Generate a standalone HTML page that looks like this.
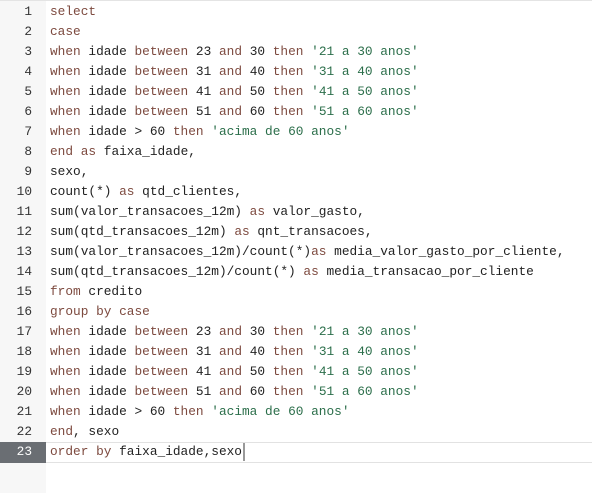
<!DOCTYPE html>
<html><head><style>
body{margin:0;width:592px;height:493px;background:#fff;overflow:hidden;font-family:"Liberation Mono",monospace;font-size:12.8px;position:relative}
#top{position:absolute;left:0;top:0;width:592px;height:1px;background:#e4e4e4}
#gut{position:absolute;left:0;top:1px;width:46px;height:492px;background:#f7f7f7}
.l{position:absolute;left:0;height:20px;line-height:20px;width:592px;white-space:pre;color:#222}
.n{position:absolute;left:0;width:32px;text-align:right;color:#333}
.c{position:absolute;left:50px}
.k{color:#7d4a3f}.s{color:#2b6e4a}
.cur{background:none}
#curline{position:absolute;left:46px;top:442px;width:546px;height:19px;border-top:1px solid #e2e2e2;border-bottom:1px solid #e2e2e2}
#curg{position:absolute;left:0;top:442px;width:46px;height:21px;background:#6a6e73}
#caret{position:absolute;left:243px;top:443px;width:1.5px;height:18px;background:#999}
</style></head><body>
<div id="top"></div><div id="gut"></div><div id="curline"></div><div id="curg"></div>
<div class="l" style="top:2px"><span class="n">1</span><span class="c"><span class="k">select</span></span></div>
<div class="l" style="top:22px"><span class="n">2</span><span class="c"><span class="k">case</span></span></div>
<div class="l" style="top:42px"><span class="n">3</span><span class="c"><span class="k">when</span> idade <span class="k">between</span> 23 <span class="k">and</span> 30 <span class="k">then</span> <span class="s">'21 a 30 anos'</span></span></div>
<div class="l" style="top:62px"><span class="n">4</span><span class="c"><span class="k">when</span> idade <span class="k">between</span> 31 <span class="k">and</span> 40 <span class="k">then</span> <span class="s">'31 a 40 anos'</span></span></div>
<div class="l" style="top:82px"><span class="n">5</span><span class="c"><span class="k">when</span> idade <span class="k">between</span> 41 <span class="k">and</span> 50 <span class="k">then</span> <span class="s">'41 a 50 anos'</span></span></div>
<div class="l" style="top:102px"><span class="n">6</span><span class="c"><span class="k">when</span> idade <span class="k">between</span> 51 <span class="k">and</span> 60 <span class="k">then</span> <span class="s">'51 a 60 anos'</span></span></div>
<div class="l" style="top:122px"><span class="n">7</span><span class="c"><span class="k">when</span> idade &gt; 60 <span class="k">then</span> <span class="s">'acima de 60 anos'</span></span></div>
<div class="l" style="top:142px"><span class="n">8</span><span class="c"><span class="k">end</span> <span class="k">as</span> faixa_idade,</span></div>
<div class="l" style="top:162px"><span class="n">9</span><span class="c">sexo,</span></div>
<div class="l" style="top:182px"><span class="n">10</span><span class="c">count(*) <span class="k">as</span> qtd_clientes,</span></div>
<div class="l" style="top:202px"><span class="n">11</span><span class="c">sum(valor_transacoes_12m) <span class="k">as</span> valor_gasto,</span></div>
<div class="l" style="top:222px"><span class="n">12</span><span class="c">sum(qtd_transacoes_12m) <span class="k">as</span> qnt_transacoes,</span></div>
<div class="l" style="top:242px"><span class="n">13</span><span class="c">sum(valor_transacoes_12m)/count(*)<span class="k">as</span> media_valor_gasto_por_cliente,</span></div>
<div class="l" style="top:262px"><span class="n">14</span><span class="c">sum(qtd_transacoes_12m)/count(*) <span class="k">as</span> media_transacao_por_cliente</span></div>
<div class="l" style="top:282px"><span class="n">15</span><span class="c"><span class="k">from</span> credito</span></div>
<div class="l" style="top:302px"><span class="n">16</span><span class="c"><span class="k">group by case</span></span></div>
<div class="l" style="top:322px"><span class="n">17</span><span class="c"><span class="k">when</span> idade <span class="k">between</span> 23 <span class="k">and</span> 30 <span class="k">then</span> <span class="s">'21 a 30 anos'</span></span></div>
<div class="l" style="top:342px"><span class="n">18</span><span class="c"><span class="k">when</span> idade <span class="k">between</span> 31 <span class="k">and</span> 40 <span class="k">then</span> <span class="s">'31 a 40 anos'</span></span></div>
<div class="l" style="top:362px"><span class="n">19</span><span class="c"><span class="k">when</span> idade <span class="k">between</span> 41 <span class="k">and</span> 50 <span class="k">then</span> <span class="s">'41 a 50 anos'</span></span></div>
<div class="l" style="top:382px"><span class="n">20</span><span class="c"><span class="k">when</span> idade <span class="k">between</span> 51 <span class="k">and</span> 60 <span class="k">then</span> <span class="s">'51 a 60 anos'</span></span></div>
<div class="l" style="top:402px"><span class="n">21</span><span class="c"><span class="k">when</span> idade &gt; 60 <span class="k">then</span> <span class="s">'acima de 60 anos'</span></span></div>
<div class="l" style="top:422px"><span class="n">22</span><span class="c"><span class="k">end</span>, sexo</span></div>
<div class="l" style="top:442px"><span class="n" style="color:#fff">23</span><span class="c"><span class="k">order by</span> faixa_idade,sexo</span></div>
<div id="caret"></div>
</body></html>
